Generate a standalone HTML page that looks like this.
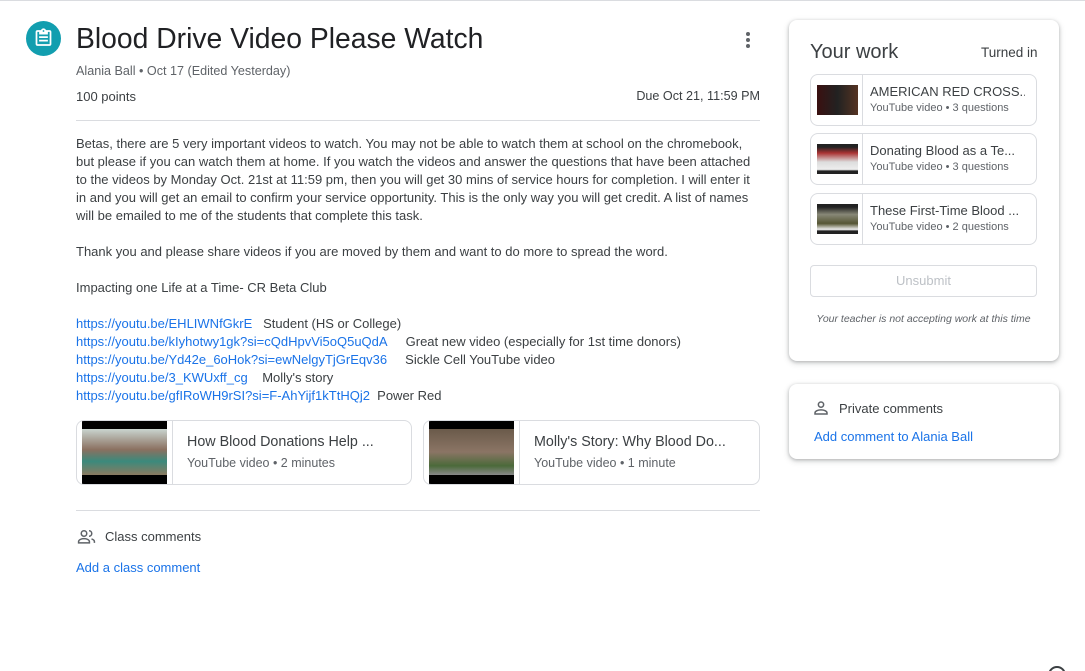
<!DOCTYPE html><html><head><style>
*{margin:0;padding:0;box-sizing:border-box}
html,body{width:1085px;height:671px;overflow:hidden}
body{background:#fff;font-family:"Liberation Sans",Arial,sans-serif;color:#3c4043;position:relative;border-top:1px solid #dadce0}
.a{position:absolute}
.link{color:#1a73e8}
.body{left:76px;top:134px;font-size:13px;line-height:18px;color:#3c4043;white-space:nowrap}
.att{position:absolute;border:1px solid #dadce0;border-radius:8px;height:65px;overflow:hidden}
.att .th{position:absolute;left:5px;top:0;width:85px;height:63px;background:#000}
.att .sep{position:absolute;left:95px;top:0;bottom:0;border-left:1px solid #dadce0}
.att .t{position:absolute;left:110px;top:13px;font-size:14.3px;color:#3c4043;white-space:nowrap}
.att .s{position:absolute;left:110px;top:35px;font-size:12.5px;color:#5f6368}
.w{position:absolute;left:21px;width:227px;height:52px;border:1px solid #dadce0;border-radius:8px;overflow:hidden}
.w .th{position:absolute;left:6px;top:10px;width:41px;height:30px;background:#222}
.w .sep{position:absolute;left:51px;top:0;bottom:0;border-left:1px solid #dadce0}
.w .t{position:absolute;left:59px;top:9px;font-size:13px;color:#3c4043;white-space:nowrap;width:155px;overflow:hidden}
.w .s{position:absolute;left:59px;top:27px;font-size:11px;color:#5f6368}
.card{position:absolute;background:#fff;border-radius:8px;box-shadow:0 1px 3px rgba(60,64,67,.3),0 2px 6px 1px rgba(60,64,67,.15)}
</style></head><body>
<div class="a" style="left:26px;top:20px;width:35px;height:35px;border-radius:50%;background:#129eaf"></div>
<svg class="a" style="left:33px;top:26px" width="21" height="22" viewBox="0 0 24 24"><path fill="#fff" d="M19 3h-4.2C14.4 1.8 13.3 1 12 1s-2.4.8-2.8 2H5c-1.1 0-2 .9-2 2v14c0 1.1.9 2 2 2h14c1.1 0 2-.9 2-2V5c0-1.1-.9-2-2-2zm-7 0c.6 0 1 .4 1 1s-.4 1-1 1-1-.4-1-1 .4-1 1-1zm7 16H5V5h2v3h10V5h2v14zM7 10h10v2H7zm0 4h10v2H7z"/></svg>
<div class="a" style="left:76px;top:21px;font-size:28.3px;color:#202124">Blood Drive Video Please Watch</div>
<div class="a" style="left:746px;top:31px;width:4px;height:4px;border-radius:2px;background:#5f6368;box-shadow:0 6px 0 #5f6368,0 12px 0 #5f6368"></div>
<div class="a" style="left:76px;top:63px;font-size:12.6px;color:#5f6368">Alania Ball • Oct 17 (Edited Yesterday)</div>
<div class="a" style="left:76px;top:88px;font-size:13px;color:#3c4043">100 points</div>
<div class="a" style="right:325px;top:88px;font-size:12.6px;color:#3c4043">Due Oct 21, 11:59 PM</div>
<div class="a" style="left:76px;top:119px;width:684px;border-top:1px solid #dadce0"></div>
<div class="a body">Betas, there are 5 very important videos to watch. You may not be able to watch them at school on the chromebook,<br>but please if you can watch them at home. If you watch the videos and answer the questions that have been attached<br>to the videos by Monday Oct. 21st at 11:59 pm, then you will get 30 mins of service hours for completion. I will enter it<br>in and you will get an email to confirm your service opportunity. This is the only way you will get credit. A list of names<br>will be emailed to me of the students that complete this task.<br><br>Thank you and please share videos if you are moved by them and want to do more to spread the word.<br><br>Impacting one Life at a Time- CR Beta Club<br><br>
<span class="link">https://youtu.be/EHLIWNfGkrE</span>&nbsp;&nbsp; Student (HS or College)<br>
<span class="link">https://youtu.be/kIyhotwy1gk?si=cQdHpvVi5oQ5uQdA</span>&nbsp;&nbsp;&nbsp;&nbsp; Great new video (especially for 1st time donors)<br>
<span class="link">https://youtu.be/Yd42e_6oHok?si=ewNelgyTjGrEqv36</span>&nbsp;&nbsp;&nbsp;&nbsp; Sickle Cell YouTube video<br>
<span class="link">https://youtu.be/3_KWUxff_cg</span>&nbsp;&nbsp;&nbsp; Molly's story<br>
<span class="link">https://youtu.be/gfIRoWH9rSI?si=F-AhYijf1kTtHQj2</span>&nbsp; Power Red</div>
<div class="att" style="left:76px;top:419px;width:336px"><div class="th"><div style="position:absolute;left:0;top:8px;width:85px;height:46px;background:linear-gradient(180deg,#c9d4cf 0%,#8a7060 45%,#3b8a7c 70%,#8a7a60 100%)"></div></div><div class="sep"></div><div class="t">How Blood Donations Help ...</div><div class="s">YouTube video • 2 minutes</div></div>
<div class="att" style="left:423px;top:419px;width:337px"><div class="th"><div style="position:absolute;left:0;top:8px;width:85px;height:46px;background:linear-gradient(180deg,#6a5a4a 0%,#8b7565 50%,#4b6a3a 80%,#888 100%)"></div></div><div class="sep"></div><div class="t">Molly's Story: Why Blood Do...</div><div class="s">YouTube video • 1 minute</div></div>
<div class="a" style="left:76px;top:509px;width:684px;border-top:1px solid #dadce0"></div>
<svg class="a" style="left:76px;top:526px" width="21" height="20" viewBox="0 0 24 24"><path fill="none" stroke="#5f6368" stroke-width="1.8" d="M9 4.5a3.3 3.3 0 1 1 0 6.6a3.3 3.3 0 1 1 0-6.6zM2.5 19v-1.5c0-2 3-3.5 6.5-3.5s6.5 1.5 6.5 3.5V19zM15 4.5a3.3 3.3 0 0 1 0 6.6M18 14.3c2 .6 3.5 1.7 3.5 3.2V19"/></svg>
<div class="a" style="left:105px;top:528px;font-size:13px">Class comments</div>
<div class="a link" style="left:76px;top:559px;font-size:13px">Add a class comment</div>

<div class="card" style="left:789px;top:19px;width:270px;height:341px">
<div class="a" style="left:21px;top:21px;font-size:20px;color:#3c4043">Your work</div>
<div class="a" style="left:192px;top:25px;font-size:13.5px;color:#3c4043">Turned in</div>
<div class="w" style="top:54px"><div class="th" style="background:linear-gradient(90deg,#3a1010,#222 50%,#553322)"></div><div class="sep"></div><div class="t">AMERICAN RED CROSS...</div><div class="s">YouTube video • 3 questions</div></div>
<div class="w" style="top:113px"><div class="th" style="background:linear-gradient(180deg,#222 10%,#a33 30%,#ddd 60%,#eee 85%,#222 90%)"></div><div class="sep"></div><div class="t">Donating Blood as a Te...</div><div class="s">YouTube video • 3 questions</div></div>
<div class="w" style="top:173px"><div class="th" style="background:linear-gradient(180deg,#222 10%,#887 35%,#553 65%,#eee 85%,#222 90%)"></div><div class="sep"></div><div class="t">These First-Time Blood ...</div><div class="s">YouTube video • 2 questions</div></div>
<div class="a" style="left:21px;top:245px;width:227px;height:32px;border:1px solid #dadce0;border-radius:4px;text-align:center;line-height:30px;font-size:13px;color:#bdc1c6">Unsubmit</div>
<div class="a" style="left:26px;top:292px;width:217px;text-align:center;font-size:10.5px;line-height:14px;font-style:italic;color:#5f6368">Your teacher is not accepting work at this time</div>
</div>
<div class="card" style="left:789px;top:383px;width:270px;height:75px">
<svg class="a" style="left:23px;top:15px" width="18" height="18" viewBox="0 0 24 24"><path fill="none" stroke="#5f6368" stroke-width="2" d="M12 4a3.5 3.5 0 1 1 0 7a3.5 3.5 0 1 1 0-7zM4 20v-1.5c0-2.5 4-4 8-4s8 1.5 8 4V20z"/></svg>
<div class="a" style="left:50px;top:17px;font-size:13px;color:#3c4043">Private comments</div>
<div class="a link" style="left:25px;top:45px;font-size:13px">Add comment to Alania Ball</div>
</div>
<div class="a" style="left:1048px;top:665px;width:18px;height:18px;border:2px solid #3c4043;border-radius:50%"></div>
</body></html>
